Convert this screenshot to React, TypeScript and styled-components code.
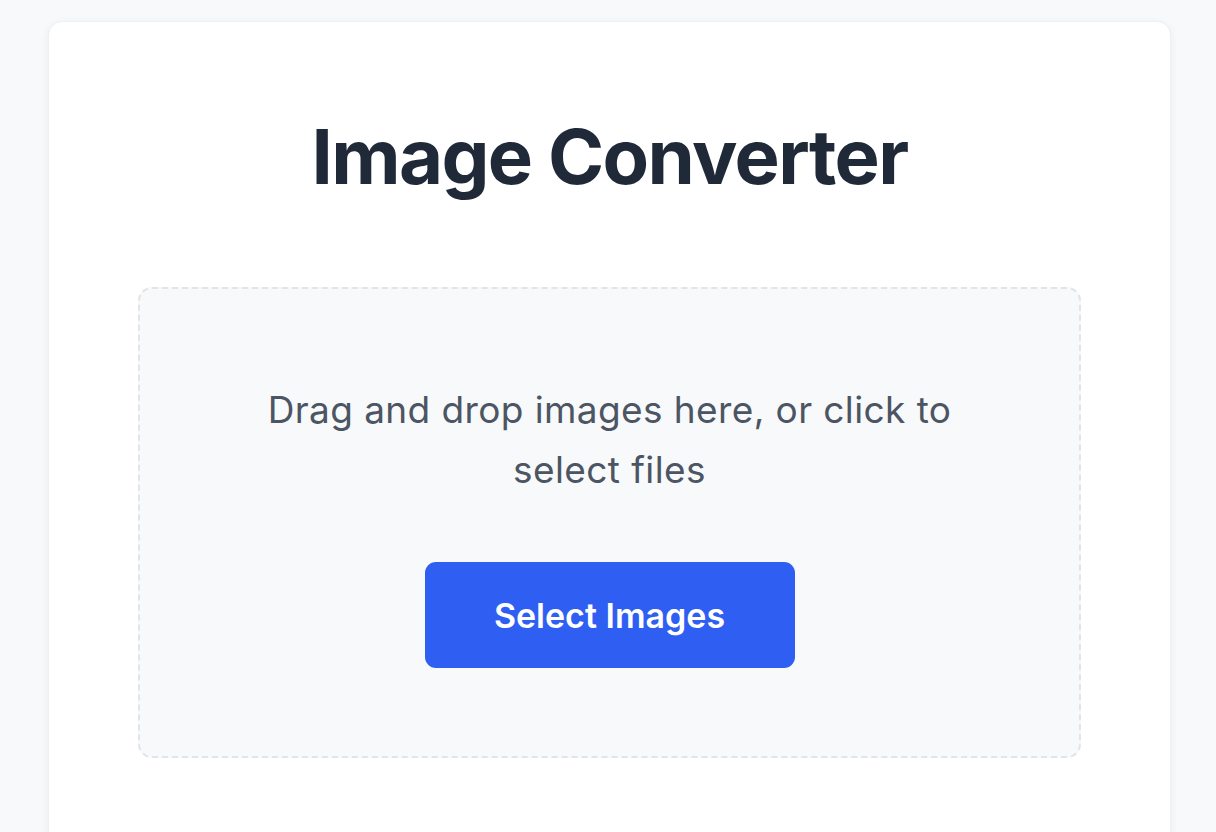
import styled, { createGlobalStyle } from 'styled-components'

const GlobalStyle = createGlobalStyle`
  html,
  body {
    margin: 0;
    padding: 0;
    background: #f8f9fb;
    font-family: Inter, 'Noto Sans', 'Liberation Sans', sans-serif;
  }

  * {
    box-sizing: border-box;
  }
`

const Page = styled.div`
  display: flex;
  justify-content: center;
  min-height: 100vh;
  padding: 21px 45px 0 48px;
  overflow: hidden;
`

const Card = styled.main`
  display: flex;
  flex-direction: column;
  align-items: center;
  width: 100%;
  min-height: 900px;
  padding: 89px 89px 60px;
  background: #ffffff;
  border: 1px solid #eef0f3;
  border-radius: 14px;
  box-shadow: 0 2px 8px rgba(17, 24, 39, 0.06);
`

const Title = styled.h1`
  margin: 0 0 85px;
  color: #1f2937;
  font-size: 76px;
  font-weight: 700;
  line-height: 1.2;
  letter-spacing: -1.6px;
  text-align: center;
`

const DropZone = styled.section`
  display: flex;
  flex-direction: column;
  align-items: center;
  width: 100%;
  padding: 91px 40px 88px;
  background: #f8f9fa;
  border: 2px dashed #e2e4e8;
  border-radius: 14px;
`

const Hint = styled.p`
  max-width: 720px;
  margin: 0 0 62px;
  color: #4b5563;
  font-size: 37px;
  font-weight: 400;
  line-height: 60px;
  letter-spacing: 0.4px;
  text-align: center;
`

const Button = styled.button`
  width: 370px;
  height: 106px;
  padding: 0;
  color: #ffffff;
  font-family: inherit;
  font-size: 34px;
  font-weight: 600;
  background: #2e5ef2;
  border: none;
  border-radius: 11px;
  cursor: pointer;
`

const App = () => {
  return (
    <>
      <GlobalStyle />
      <Page>
        <Card>
          <Title>Image Converter</Title>
          <DropZone>
            <Hint>Drag and drop images here, or click to select files</Hint>
            <Button type="button">Select Images</Button>
          </DropZone>
        </Card>
      </Page>
    </>
  )
}

export default App
